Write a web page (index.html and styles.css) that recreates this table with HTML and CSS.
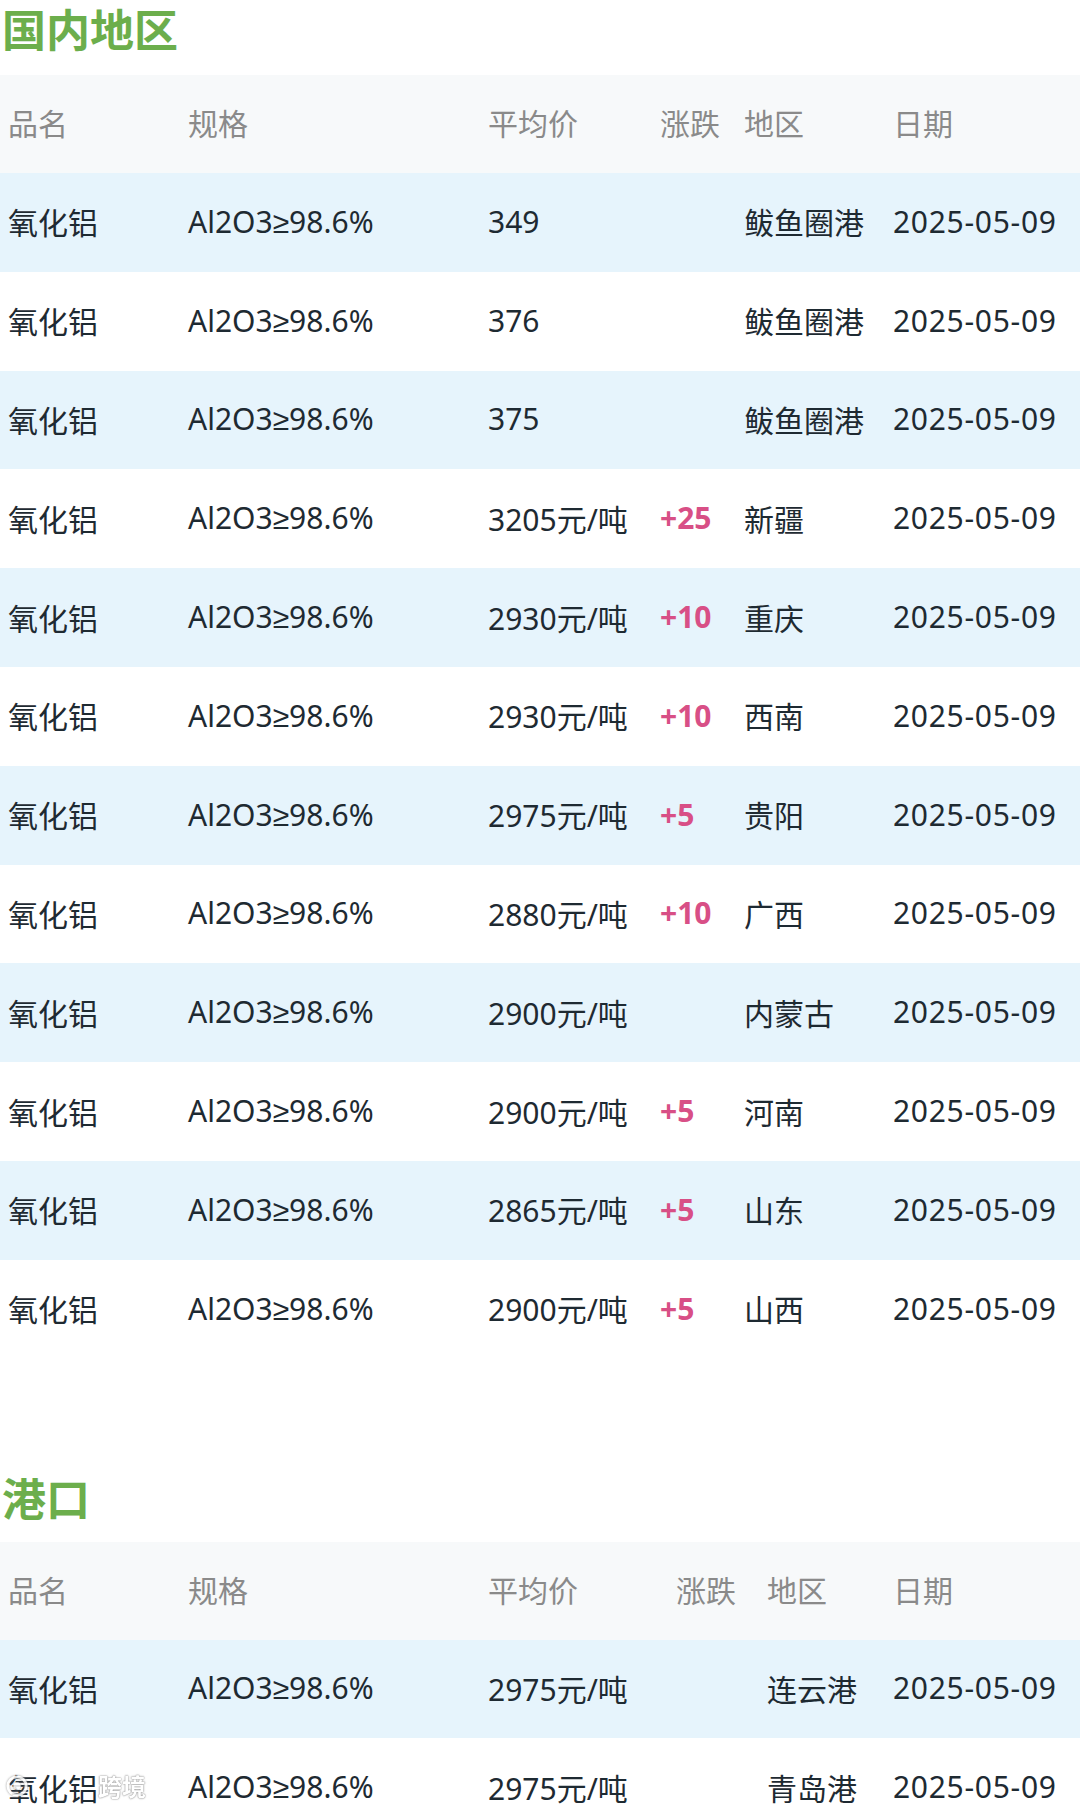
FILE: index.html
```html
<!DOCTYPE html>
<html lang="zh">
<head>
<meta charset="utf-8">
<link rel="stylesheet" href="styles.css">
</head>
<body>
<div class="page">
  <section class="section">
    <h2 class="title">国内地区</h2>
    <table class="price-table">
      <colgroup>
        <col class="c-name"><col class="c-spec"><col class="c-price-a"><col class="c-chg-a"><col class="c-area-a"><col class="c-date">
      </colgroup>
      <thead>
        <tr><th>品名</th><th>规格</th><th>平均价</th><th>涨跌</th><th>地区</th><th>日期</th></tr>
      </thead>
      <tbody>
        <tr><td>氧化铝</td><td>Al2O3≥98.6%</td><td>349</td><td class="chg"></td><td>鲅鱼圈港</td><td class="date">2025-05-09</td></tr>
        <tr><td>氧化铝</td><td>Al2O3≥98.6%</td><td>376</td><td class="chg"></td><td>鲅鱼圈港</td><td class="date">2025-05-09</td></tr>
        <tr><td>氧化铝</td><td>Al2O3≥98.6%</td><td>375</td><td class="chg"></td><td>鲅鱼圈港</td><td class="date">2025-05-09</td></tr>
        <tr><td>氧化铝</td><td>Al2O3≥98.6%</td><td>3205元/吨</td><td class="chg">+25</td><td>新疆</td><td class="date">2025-05-09</td></tr>
        <tr><td>氧化铝</td><td>Al2O3≥98.6%</td><td>2930元/吨</td><td class="chg">+10</td><td>重庆</td><td class="date">2025-05-09</td></tr>
        <tr><td>氧化铝</td><td>Al2O3≥98.6%</td><td>2930元/吨</td><td class="chg">+10</td><td>西南</td><td class="date">2025-05-09</td></tr>
        <tr><td>氧化铝</td><td>Al2O3≥98.6%</td><td>2975元/吨</td><td class="chg">+5</td><td>贵阳</td><td class="date">2025-05-09</td></tr>
        <tr><td>氧化铝</td><td>Al2O3≥98.6%</td><td>2880元/吨</td><td class="chg">+10</td><td>广西</td><td class="date">2025-05-09</td></tr>
        <tr><td>氧化铝</td><td>Al2O3≥98.6%</td><td>2900元/吨</td><td class="chg"></td><td>内蒙古</td><td class="date">2025-05-09</td></tr>
        <tr><td>氧化铝</td><td>Al2O3≥98.6%</td><td>2900元/吨</td><td class="chg">+5</td><td>河南</td><td class="date">2025-05-09</td></tr>
        <tr><td>氧化铝</td><td>Al2O3≥98.6%</td><td>2865元/吨</td><td class="chg">+5</td><td>山东</td><td class="date">2025-05-09</td></tr>
        <tr><td>氧化铝</td><td>Al2O3≥98.6%</td><td>2900元/吨</td><td class="chg">+5</td><td>山西</td><td class="date">2025-05-09</td></tr>
      </tbody>
    </table>
  </section>

  <section class="section section-port">
    <h2 class="title">港口</h2>
    <table class="price-table">
      <colgroup>
        <col class="c-name"><col class="c-spec"><col class="c-price-b"><col class="c-chg-b"><col class="c-area-b"><col class="c-date">
      </colgroup>
      <thead>
        <tr><th>品名</th><th>规格</th><th>平均价</th><th>涨跌</th><th>地区</th><th>日期</th></tr>
      </thead>
      <tbody>
        <tr><td>氧化铝</td><td>Al2O3≥98.6%</td><td>2975元/吨</td><td class="chg"></td><td>连云港</td><td class="date">2025-05-09</td></tr>
        <tr><td>氧化铝</td><td>Al2O3≥98.6%</td><td>2975元/吨</td><td class="chg"></td><td>青岛港</td><td class="date">2025-05-09</td></tr>
      </tbody>
    </table>
  </section>

  <div class="watermark">
    <svg class="wm-logo" viewBox="0 0 24 24" width="22" height="22" aria-hidden="true">
      <circle cx="12" cy="12" r="10" fill="none" stroke="#ffffff" stroke-width="3"/>
      <circle cx="12" cy="12" r="4" fill="#ffffff"/>
    </svg>
    <span class="wm-text">跨境</span>
  </div>
</div>
</body>
</html>
```

FILE: styles.css
```css
html, body {
  margin: 0;
  padding: 0;
  background: #ffffff;
}

body {
  width: 1080px;
  height: 1812px;
  overflow: hidden;
  font-family: "Noto Sans", "Liberation Sans", "Noto Sans CJK SC", sans-serif;
  color: #1e2a32;
}

.page {
  position: relative;
  width: 1080px;
}

.section {
  display: block;
}

.section-port {
  margin-top: 110px;
}

.title {
  margin: 0;
  padding: 0 0 19px 2px;
  font-family: "Noto Sans CJK SC", sans-serif;
  font-size: 44px;
  line-height: 56px;
  font-weight: 700;
  color: #6cae4c;
}

.section-port .title {
  padding-bottom: 17px;
}

.price-table {
  width: 1080px;
  border-collapse: collapse;
  table-layout: fixed;
}

.c-name { width: 180px; }
.c-spec { width: 300px; }
.c-price-a { width: 172px; }
.c-chg-a { width: 84px; }
.c-area-a { width: 149px; }
.c-price-b { width: 188px; }
.c-chg-b { width: 91px; }
.c-area-b { width: 126px; }
.c-date { width: 195px; }

.price-table th,
.price-table td {
  padding: 0 0 4px 8px;
  text-align: left;
  white-space: nowrap;
  vertical-align: middle;
}

.price-table thead tr {
  height: 98px;
  background: #f7f9fa;
}

.price-table th {
  font-size: 30px;
  font-weight: 400;
  color: #8a8a8a;
  font-family: "Noto Sans CJK SC", sans-serif;
}

.price-table tbody tr {
  height: 98.8px;
}

.price-table tbody tr:nth-child(odd) {
  background: #e6f4fc;
}

.price-table td {
  font-size: 30px;
  color: #1e2a32;
  padding-bottom: 2px;
}

.price-table td.date {
  letter-spacing: 0.7px;
}

.price-table td.chg {
  font-weight: 700;
  color: #d84f86;
}

.watermark {
  position: absolute;
  left: 6px;
  top: 1768px;
  display: flex;
  align-items: center;
  gap: 4px;
  opacity: 0.85;
  pointer-events: none;
}

.wm-logo {
  filter: drop-shadow(0 0 1px #888888);
}

.wm-text {
  margin-left: 66px;
  font-family: "Noto Sans CJK SC", sans-serif;
  font-size: 24px;
  font-weight: 700;
  color: #ffffff;
  text-shadow: 0 0 2px #777777, 0 0 1px #777777;
}
```
